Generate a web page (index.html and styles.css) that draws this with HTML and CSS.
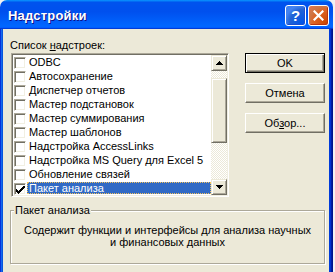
FILE: index.html
```html
<!DOCTYPE html>
<html lang="ru">
<head>
    <meta charset="UTF-8">
    <title>Надстройки</title>
    <link rel="stylesheet" href="styles.css">
</head>
<body>
<div class="window">
    <div class="title-bar">
        <span class="title">Надстройки</span>
        <div class="title-buttons">
            <button class="tb-btn tb-help">?</button>
            <button class="tb-btn tb-close">
                <svg width="11" height="11" viewBox="0 0 11 11"><path d="M1.5 1.5L9.5 9.5M9.5 1.5L1.5 9.5" stroke="#fff" stroke-width="2.2" stroke-linecap="square"/></svg>
            </button>
        </div>
    </div>
    <div class="frame">
        <div class="client">
            <div class="top">
                <div class="list-col">
                    <div class="label">Список <u>н</u>адстроек:</div>
                    <div class="listbox">
                        <ul class="items">
                            <li><span class="check"></span><span class="name">ODBC</span></li>
                            <li><span class="check"></span><span class="name">Автосохранение</span></li>
                            <li><span class="check"></span><span class="name">Диспетчер отчетов</span></li>
                            <li><span class="check"></span><span class="name">Мастер подстановок</span></li>
                            <li><span class="check"></span><span class="name">Мастер суммирования</span></li>
                            <li><span class="check"></span><span class="name">Мастер шаблонов</span></li>
                            <li><span class="check"></span><span class="name">Надстройка AccessLinks</span></li>
                            <li><span class="check"></span><span class="name">Надстройка MS Query для Excel 5</span></li>
                            <li><span class="check"></span><span class="name">Обновление связей</span></li>
                            <li class="selected">
                                <span class="check"><svg width="9" height="8" viewBox="0 0 9 8"><path d="M0 3h1v1h1v1h1V4h1V3h1V2h1V1h1V0h2v2H8v1H7v1H6v1H5v1H4v1H3v1H2V7H1V6H0z" fill="#000"/></svg></span>
                                <span class="name">Пакет анализа</span>
                            </li>
                        </ul>
                        <div class="scrollbar">
                            <div class="sb-btn">
                                <svg width="7" height="4" viewBox="0 0 7 4"><path d="M3 0h1v1h1v1h1v1h1v1H0V3h1V2h1V1h1z" fill="#000"/></svg>
                            </div>
                            <div class="sb-track">
                                <div class="sb-thumb"></div>
                            </div>
                            <div class="sb-btn">
                                <svg width="7" height="4" viewBox="0 0 7 4"><path d="M0 0h7v1H6v1H5v1H4v1H3V3H2V2H1V1H0z" fill="#000"/></svg>
                            </div>
                        </div>
                    </div>
                </div>
                <div class="buttons">
                    <button class="btn default">OK</button>
                    <button class="btn">Отмена</button>
                    <button class="btn">Об<u>з</u>ор...</button>
                </div>
            </div>
            <fieldset class="group">
                <legend>Пакет анализа</legend>
                <p class="desc">Содержит функции и интерфейсы для анализа научных<br>и финансовых данных</p>
            </fieldset>
        </div>
    </div>
</div>
</body>
</html>
```

FILE: styles.css
```css
* {
    box-sizing: border-box;
}
body {
    margin: 0;
    background: #f2f2f2;
    font-family: "Liberation Sans", Arial, sans-serif;
    font-size: 11px;
    color: #000;
    overflow: hidden;
}
.window {
    width: 333px;
}
.title-bar {
    height: 29px;
    display: flex;
    align-items: center;
    padding: 0 4px 0 8px;
    border-radius: 7px 7px 0 0;
    background: linear-gradient(180deg, #0997ff, #0053ee 8%, #0050ee 40%, #06f 88%, #06f 93%, #005bff 95%, #003dd7 96%, #003dd7);
}
.title {
    color: #fff;
    font-weight: bold;
    font-size: 13px;
    letter-spacing: 0.2px;
    text-shadow: 1px 1px #0f1089;
    margin-top: 2px;
}
.title-buttons {
    margin-left: auto;
    display: flex;
    gap: 2px;
    margin-top: 2px;
}
.tb-btn {
    width: 21px;
    height: 21px;
    padding: 0;
    border: 1px solid #fff;
    border-radius: 3px;
    display: flex;
    align-items: center;
    justify-content: center;
    color: #fff;
    font-family: "Liberation Sans", Arial, sans-serif;
    font-weight: bold;
    font-size: 15px;
}
.tb-help {
    background: radial-gradient(circle at 90% 90%, #0054e9 0%, #2263d5 55%, #4483f0 75%, #3c81f3 100%);
    box-shadow: inset -1px -1px #1c4ed0;
}
.tb-close {
    background: radial-gradient(circle at 90% 90%, #cc4600 0%, #dc6527 55%, #cd7546 70%, #e5774f 100%);
    box-shadow: inset -1px -1px #b8360f;
}
.frame {
    padding: 0 4px 0 3px;
    background: linear-gradient(to right, #0831d9 0 1px, #166aee 1px 2px, #0855dd 2px 3px, transparent 3px calc(100% - 4px), #003bda calc(100% - 4px) calc(100% - 3px), #0032d0 calc(100% - 3px) calc(100% - 2px), #001ea0 calc(100% - 2px) calc(100% - 1px), #00138c calc(100% - 1px));
}
.client {
    background: #ece9d8;
    height: 243px;
    padding: 9px 4px 0 7px;
}
.top {
    display: flex;
}
.list-col {
    width: 219px;
}
.label {
    height: 14px;
    line-height: 14px;
    margin-bottom: 1px;
}
.listbox {
    margin-left: 1px;
    width: 218px;
    height: 144px;
    display: flex;
    background: #fff;
    border: 1px solid;
    border-color: #aca899 #fff #fff #aca899;
    box-shadow: inset 1px 1px #716f64, inset -1px -1px #f1efe2;
    padding: 1px;
}
.items {
    list-style: none;
    margin: 0;
    padding: 0;
    flex: 1;
}
.items li {
    height: 14px;
    display: flex;
    align-items: flex-start;
    white-space: nowrap;
}
.check {
    width: 12px;
    height: 12px;
    margin: 2px 0 0 1px;
    background: #fff;
    border: 1px solid;
    border-color: #aca899 #fff #fff #aca899;
    box-shadow: inset 1px 1px #716f64, inset -1px -1px #f1efe2;
    display: flex;
    align-items: center;
    justify-content: center;
}
.check svg {
    margin: 1px 0 0 1px;
}
.name {
    margin-left: 1px;
    padding-left: 2px;
    height: 13px;
    line-height: 14px;
}
.selected .name {
    flex: 1;
    margin-top: 1px;
    height: 12px;
    line-height: 12px;
    background: #316ac5;
    color: #fff;
    outline: 1px dotted #f2c25e;
    outline-offset: -1px;
}
.scrollbar {
    width: 16px;
    display: flex;
    flex-direction: column;
}
.sb-btn, .sb-thumb {
    background: #ece9d8;
    border: 1px solid;
    border-color: #ece9d8 #716f64 #716f64 #ece9d8;
    box-shadow: inset 1px 1px #fff, inset -1px -1px #aca899;
}
.sb-btn {
    height: 16px;
    display: flex;
    align-items: center;
    justify-content: center;
}
.sb-track {
    flex: 1;
    background: repeating-conic-gradient(#fff 0 25%, #ece9d8 0 50%) 0 0 / 2px 2px;
}
.sb-thumb {
    margin-top: 7px;
    height: 65px;
}
.buttons {
    margin-left: auto;
    width: 80px;
    padding-top: 15px;
    display: flex;
    flex-direction: column;
}
.btn {
    height: 20px;
    margin-bottom: 10px;
    padding: 0;
    font-family: "Liberation Sans", Arial, sans-serif;
    font-size: 11px;
    color: #000;
    background: #ece9d8;
    border: 1px solid;
    border-color: #fff #716f64 #716f64 #fff;
    box-shadow: inset -1px -1px #aca899;
}
.btn.default {
    border: 1px solid #000;
    box-shadow: inset 1px 1px #fff, inset -1px -1px #716f64, inset -2px -2px #aca899;
}
.group {
    margin: 7px 0 0 0;
    padding: 7px 0 15px;
    min-width: 0;
    border: 1px solid #aca899;
    box-shadow: 1px 1px #fff, inset 1px 1px #fff;
}
.group legend {
    margin-left: 3px;
    padding: 0 1px;
    line-height: 13px;
    background: #ece9d8;
}
.desc {
    margin: 0;
    text-align: center;
    line-height: 12px;
}
```
